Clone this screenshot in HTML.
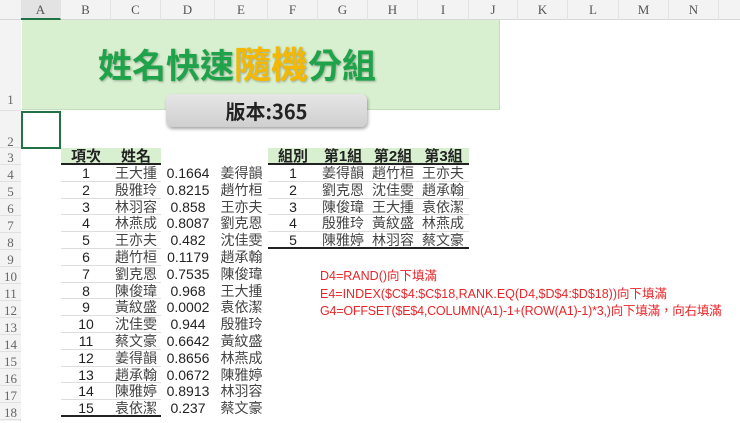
<!DOCTYPE html>
<html><head><meta charset="utf-8"><style>
*{margin:0;padding:0;box-sizing:border-box}
body{width:740px;height:421px;overflow:hidden;background:#fff;position:relative;font-family:"Liberation Sans","Noto Sans CJK TC",sans-serif;font-size:14px;color:#222}
.a{position:absolute}
.ch{position:absolute;top:0;height:20px;line-height:20px;text-align:center;font-family:"Liberation Serif",serif;font-size:13px;color:#555;border-right:1px solid #e2e2e2}
.rh{position:absolute;left:0;width:21px;text-align:center;font-family:"Liberation Serif",serif;font-size:13px;color:#666;background:#f3f3f3;border-bottom:1px solid #e0e0e0}
.c{position:absolute;height:17px;line-height:17px;text-align:center;white-space:nowrap}
.red{position:absolute;left:320px;color:#e8262a;font-size:12.5px;white-space:nowrap}
</style></head><body>
<div class="a" style="left:0;top:0;width:740px;height:20px;background:#f3f3f3;border-bottom:1px solid #d6d6d6"></div>
<div class="a" style="left:0;top:20px;width:21px;height:401px;background:#f3f3f3;border-right:1px solid #d6d6d6"></div>
<div class="ch" style="left:21px;width:40px;background:#e3e3e3;border-bottom:2px solid #217346">A</div>
<div class="ch" style="left:61px;width:50px">B</div>
<div class="ch" style="left:111px;width:50px">C</div>
<div class="ch" style="left:161px;width:54px">D</div>
<div class="ch" style="left:215px;width:53px">E</div>
<div class="ch" style="left:268px;width:50px">F</div>
<div class="ch" style="left:318px;width:50px">G</div>
<div class="ch" style="left:368px;width:50px">H</div>
<div class="ch" style="left:418px;width:51px">I</div>
<div class="ch" style="left:469px;width:49px">J</div>
<div class="ch" style="left:518px;width:50px">K</div>
<div class="ch" style="left:568px;width:51px">L</div>
<div class="ch" style="left:619px;width:50px">M</div>
<div class="ch" style="left:669px;width:50px">N</div>

<div class="rh" style="top:20px;height:91px;line-height:160px">1</div>
<div class="rh" style="top:111px;height:37px;line-height:62px">2</div>
<div class="rh" style="top:148px;height:17px;line-height:20px">3</div>
<div class="rh" style="top:165px;height:17px;line-height:20px">4</div>
<div class="rh" style="top:182px;height:17px;line-height:20px">5</div>
<div class="rh" style="top:199px;height:17px;line-height:20px">6</div>
<div class="rh" style="top:216px;height:17px;line-height:20px">7</div>
<div class="rh" style="top:233px;height:17px;line-height:20px">8</div>
<div class="rh" style="top:250px;height:17px;line-height:20px">9</div>
<div class="rh" style="top:267px;height:17px;line-height:20px">10</div>
<div class="rh" style="top:284px;height:17px;line-height:20px">11</div>
<div class="rh" style="top:301px;height:17px;line-height:20px">12</div>
<div class="rh" style="top:318px;height:17px;line-height:20px">13</div>
<div class="rh" style="top:335px;height:17px;line-height:20px">14</div>
<div class="rh" style="top:352px;height:17px;line-height:20px">15</div>
<div class="rh" style="top:369px;height:17px;line-height:20px">16</div>
<div class="rh" style="top:386px;height:17px;line-height:20px">17</div>
<div class="rh" style="top:403px;height:17px;line-height:20px">18</div>

<div class="a" style="left:22px;top:20px;width:478px;height:90px;background:#d8f0cf;border-right:1px solid #c6dcc0;border-bottom:1px solid #c6dcc0"></div>
<div class="a" style="left:98px;top:39px;width:300px;white-space:nowrap;font-size:34px;font-weight:bold;color:#1fa34a;text-shadow:1px 1px 2px rgba(0,0,0,.3);font-family:'Noto Sans CJK TC',sans-serif;line-height:46px">姓名快速<span style="color:#f5b800;font-size:37px">隨機</span>分組</div>
<div class="a" style="left:166px;top:94px;width:201px;height:33px;border-radius:6px;background:linear-gradient(#e6e6e6,#cfcfcf);box-shadow:1px 2px 3px rgba(0,0,0,.35);text-align:center;line-height:33px;font-size:20px;font-weight:bold;color:#222;font-family:'Noto Sans CJK TC',sans-serif">版本:365</div>
<div class="a" style="left:21px;top:111px;width:40px;height:38px;border:2px solid #217346"></div>

<div class="a" style="left:61px;top:148px;width:100px;height:17px;background:#d8f0cf;border-bottom:2px solid #222"></div>
<div class="c" style="left:61px;top:148px;width:50px;font-weight:bold;font-size:15px">項次</div>
<div class="c" style="left:111px;top:148px;width:50px;font-weight:bold;font-size:15px">姓名</div>
<div id="t1"></div>
<div class="a" style="left:268px;top:148px;width:201px;height:17px;background:#d8f0cf;border-bottom:2px solid #222"></div>
<div class="c" style="left:268px;top:148px;width:50px;font-weight:bold;font-size:15px">組別</div>
<div class="c" style="left:318px;top:148px;width:50px;font-weight:bold;font-size:15px">第1組</div>
<div class="c" style="left:368px;top:148px;width:50px;font-weight:bold;font-size:15px">第2組</div>
<div class="c" style="left:418px;top:148px;width:51px;font-weight:bold;font-size:15px">第3組</div>

<div class="red" style="top:265px">D4=RAND()向下填滿</div>
<div class="red" style="top:283px">E4=INDEX($C$4:$C$18,RANK.EQ(D4,$D$4:$D$18))向下填滿</div>
<div class="red" style="top:300px;letter-spacing:-0.2px">G4=OFFSET($E$4,COLUMN(A1)-1+(ROW(A1)-1)*3,)向下填滿，向右填滿</div>

<script>
var n=["王大揰","殷雅玲","林羽容","林燕成","王亦夫","趙竹桓","劉克恩","陳俊瑋","黃紋盛","沈佳雯","蔡文豪","姜得韻","趙承翰","陳雅婷","袁依潔"];
var d=["0.1664","0.8215","0.858","0.8087","0.482","0.1179","0.7535","0.968","0.0002","0.944","0.6642","0.8656","0.0672","0.8913","0.237"];
var e=["姜得韻","趙竹桓","王亦夫","劉克恩","沈佳雯","趙承翰","陳俊瑋","王大揰","袁依潔","殷雅玲","黃紋盛","林燕成","陳雅婷","林羽容","蔡文豪"];
var h="";
for(var i=0;i<15;i++){var t=165+i*16.8;var last=i==14;
h+='<div class="a" style="left:61px;top:'+t+'px;width:100px;height:16.8px;border-bottom:'+(last?'2px solid #222':'1px solid #ddd')+'"></div>';
h+='<div class="c" style="left:61px;top:'+t+'px;width:50px">'+(i+1)+'</div>';
h+='<div class="c" style="left:111px;top:'+t+'px;width:50px;color:#444">'+n[i]+'</div>';
h+='<div class="c" style="left:161px;top:'+t+'px;width:54px">'+d[i]+'</div>';
h+='<div class="c" style="left:215px;top:'+t+'px;width:53px;color:#444">'+e[i]+'</div>';
if(i<5){last=i==4;
h+='<div class="a" style="left:268px;top:'+t+'px;width:201px;height:16.8px;border-bottom:'+(last?'2px solid #222':'1px solid #ddd')+'"></div>';
h+='<div class="c" style="left:268px;top:'+t+'px;width:50px">'+(i+1)+'</div>';
for(var k=0;k<3;k++)h+='<div class="c" style="left:'+(318+k*50)+'px;top:'+t+'px;width:50px;color:#444">'+e[i*3+k]+'</div>';}
}
document.getElementById("t1").outerHTML=h;
</script>
</body></html>
